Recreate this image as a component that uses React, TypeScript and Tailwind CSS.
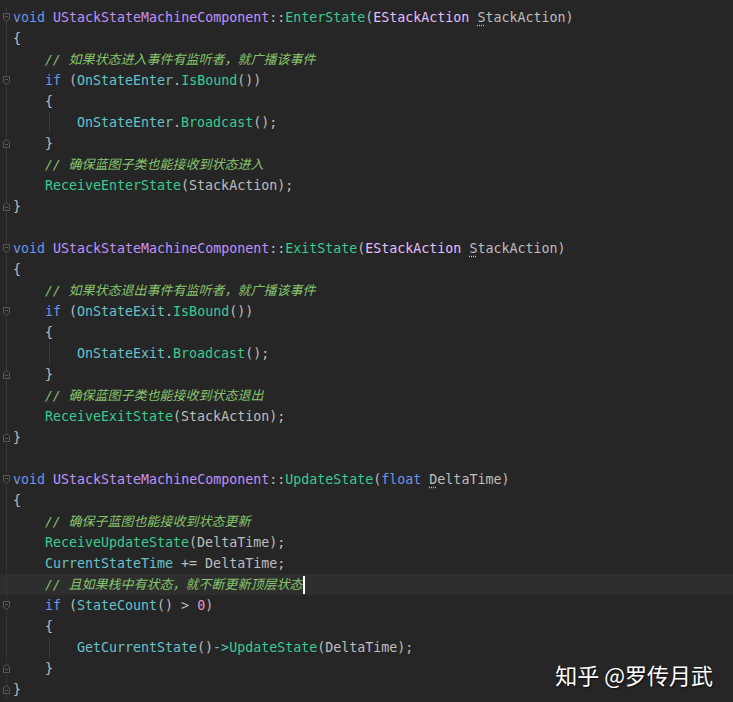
import type { ReactNode } from "react";

type Tok = [string, string];

const KW = "text-[#6c95eb]";
const CLS = "text-[#c191ff]";
const ENUM = "text-[#e1bfff]";
const FN = "text-[#39cc8f]";
const FIELD = "text-[#66c3cc]";
const TXT = "text-[#bdbdbd]";
const NUM = "text-[#ed94c0]";
const DOT = "dot";
const CMT = "cmt";

type Line = { indent: number; toks: Tok[]; fold?: "start" | "end"; guides?: number[]; caret?: boolean };

const head = (name: string, params: Tok[]): Tok[] => [
  ["void", KW],
  [" ", TXT],
  ["UStackStateMachineComponent", CLS],
  ["::", TXT],
  [name, FN],
  ["(", TXT],
  ...params,
  [")", TXT],
];

const stackParam: Tok[] = [
  ["EStackAction", ENUM],
  [" ", TXT],
  ["S", DOT],
  ["tackAction", TXT],
];

const lines: Line[] = [
  { indent: 0, toks: head("EnterState", stackParam), fold: "start" },
  { indent: 0, toks: [["{", TXT]] },
  { indent: 4, toks: [["// 如果状态进入事件有监听者，就广播该事件", CMT]] },
  { indent: 4, fold: "start", toks: [["if", KW], [" (", TXT], ["OnStateEnter", FIELD], [".", TXT], ["IsBound", FN], ["())", TXT]] },
  { indent: 4, toks: [["{", TXT]] },
  { indent: 8, guides: [1], toks: [["OnStateEnter", FIELD], [".", TXT], ["Broadcast", FN], ["();", TXT]] },
  { indent: 4, fold: "end", toks: [["}", TXT]] },
  { indent: 4, toks: [["// 确保蓝图子类也能接收到状态进入", CMT]] },
  { indent: 4, toks: [["ReceiveEnterState", FN], ["(StackAction);", TXT]] },
  { indent: 0, fold: "end", toks: [["}", TXT]] },
  { indent: 0, toks: [] },
  { indent: 0, toks: head("ExitState", stackParam), fold: "start" },
  { indent: 0, toks: [["{", TXT]] },
  { indent: 4, toks: [["// 如果状态退出事件有监听者，就广播该事件", CMT]] },
  { indent: 4, fold: "start", toks: [["if", KW], [" (", TXT], ["OnStateExit", FIELD], [".", TXT], ["IsBound", FN], ["())", TXT]] },
  { indent: 4, toks: [["{", TXT]] },
  { indent: 8, guides: [1], toks: [["OnStateExit", FIELD], [".", TXT], ["Broadcast", FN], ["();", TXT]] },
  { indent: 4, fold: "end", toks: [["}", TXT]] },
  { indent: 4, toks: [["// 确保蓝图子类也能接收到状态退出", CMT]] },
  { indent: 4, toks: [["ReceiveExitState", FN], ["(StackAction);", TXT]] },
  { indent: 0, fold: "end", toks: [["}", TXT]] },
  { indent: 0, toks: [] },
  {
    indent: 0,
    fold: "start",
    toks: head("UpdateState", [["float", KW], [" ", TXT], ["D", DOT], ["eltaTime", TXT]]),
  },
  { indent: 0, toks: [["{", TXT]] },
  { indent: 4, toks: [["// 确保子蓝图也能接收到状态更新", CMT]] },
  { indent: 4, toks: [["ReceiveUpdateState", FN], ["(DeltaTime);", TXT]] },
  { indent: 4, toks: [["CurrentStateTime", FIELD], [" += DeltaTime;", TXT]] },
  { indent: 4, caret: true, toks: [["// 且如果栈中有状态，就不断更新顶层状态", CMT]] },
  { indent: 4, fold: "start", toks: [["if", KW], [" (", TXT], ["StateCount", FIELD], ["() > ", TXT], ["0", NUM], [")", TXT]] },
  { indent: 4, toks: [["{", TXT]] },
  {
    indent: 8,
    guides: [1],
    toks: [["GetCurrentState", FIELD], ["()", TXT], ["->", FIELD], ["UpdateState", FN], ["(DeltaTime);", TXT]],
  },
  { indent: 4, fold: "end", toks: [["}", TXT]] },
  { indent: 0, fold: "end", toks: [["}", TXT]] },
];

function FoldMark({ kind }: { kind: "start" | "end" }) {
  return (
    <svg width="9" height="11" viewBox="0 0 9 11" className="bg-[#262626]">
      {kind === "start" ? (
        <path d="M1.5 1.5h6v5.5l-3 2.5-3-2.5z M3 4.5h3" fill="none" stroke="#5a5a5a" strokeWidth="1" />
      ) : (
        <path d="M1.5 9.5h6v-5.5l-3-2.5-3 2.5z M3 6.5h3" fill="none" stroke="#5a5a5a" strokeWidth="1" />
      )}
    </svg>
  );
}

function renderTok([text, cls]: Tok, i: number): ReactNode {
  if (cls === CMT) {
    return (
      <span key={i} className="italic text-[#85c46c] text-[13px]">
        {text}
      </span>
    );
  }
  if (cls === DOT) {
    return (
      <span key={i} className="text-[#bdbdbd] underline decoration-dotted decoration-[#bdbdbd] underline-offset-[3px]">
        {text}
      </span>
    );
  }
  return (
    <span key={i} className={cls}>
      {text}
    </span>
  );
}

function CodeLine({ line }: { line: Line }) {
  const units = line.indent / 4;
  return (
    <div className={`flex h-[21px] items-center ${line.caret ? "bg-[#2e2e2e]" : ""}`}>
      <div className="flex h-full w-[13px] shrink-0 items-center justify-center pr-[1px] bg-[linear-gradient(to_right,transparent_6px,#363636_6px,#363636_7px,transparent_7px)]">
        {line.fold && <FoldMark kind={line.fold} />}
      </div>
      <div className="flex h-full items-center whitespace-pre">
        {Array.from({ length: units }).map((_, u) => (
          <span key={u} className="flex h-full w-[32px] shrink-0">
            {line.guides?.includes(u) && <span className="ml-[4px] h-full border-l border-[#3c3c3c]" />}
          </span>
        ))}
        {line.toks.map(renderTok)}
        {line.caret && <span className="ml-[1px] inline-block h-[18px] w-[2px] bg-white" />}
      </div>
    </div>
  );
}

export default function App() {
  return (
    <div className="relative h-[702px] w-[733px] overflow-hidden bg-[#262626] pt-[7px] font-['DejaVu_Sans_Mono','Noto_Sans_CJK_SC',monospace] text-[13.3px] leading-[21px]">
      {lines.map((l, i) => (
        <CodeLine key={i} line={l} />
      ))}
      <div className="absolute bottom-[17px] right-[20px] font-['Noto_Sans_CJK_SC',sans-serif] text-[22px] leading-none text-white [text-shadow:1px_1px_2px_rgba(0,0,0,0.7)]">
        知乎 @罗传月武
      </div>
    </div>
  );
}
